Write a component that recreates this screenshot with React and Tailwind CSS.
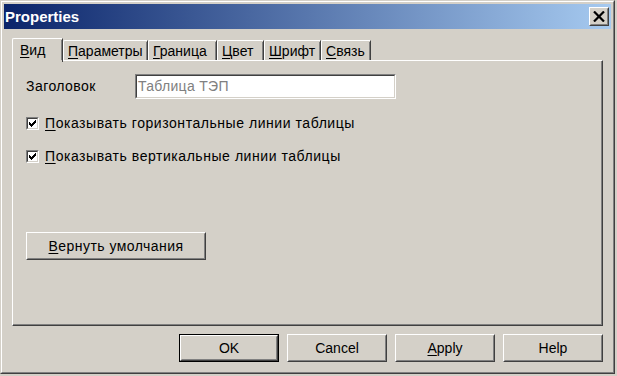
import React from "react";

const font = { fontFamily: '"Liberation Sans", Arial, sans-serif' };

function U({ children }) {
  return <span className="underline underline-offset-2 decoration-1">{children}</span>;
}

function Tab({ first, label }) {
  return (
    <div className="relative z-10 -mb-[2px] h-[24px] w-[51px] border-l border-t border-r border-l-white border-t-white border-r-[#404040] rounded-tl-[2px] bg-[#d4d0c8] flex items-start pt-[2px] pl-[7px]">
      <div className="border-r border-[#808080] absolute right-0 top-[1px] bottom-[2px]" />
      <span className="text-[14px] leading-[18px] text-black"><U>{first}</U>{label}</span>
    </div>
  );
}

function InTab({ first, label, w }) {
  return (
    <div
      className="relative h-[20px] border-l border-t border-r border-l-white border-t-white border-r-[#404040] rounded-tl-[2px] bg-[#d4d0c8] flex items-start pl-[4px] pt-[1px]"
      style={{ width: w }}
    >
      <div className="border-r border-[#808080] absolute right-0 top-[1px] bottom-0" />
      <span className="text-[14px] leading-[18px] text-black whitespace-nowrap"><U>{first}</U>{label}</span>
    </div>
  );
}

function Checkbox({ first, label }) {
  return (
    <div className="flex items-center gap-[6px] h-[14px]">
      <div className="w-[13px] h-[13px] border border-t-[#808080] border-l-[#808080] border-b-white border-r-white">
        <div className="w-full h-full border border-t-[#404040] border-l-[#404040] border-b-[#d4d0c8] border-r-[#d4d0c8] bg-white flex items-center justify-center">
          <svg width="7" height="7" viewBox="0 0 7 7" shapeRendering="crispEdges">
            <path d="M0 2h1v1h1v1h1V3h1V2h1V1h1V0h1v3H6v1H5v1H4v1H3v1H2V6H1V5H0z" fill="#000" />
          </svg>
        </div>
      </div>
      <span className="text-[14px] leading-[18px] tracking-[0.55px] text-black whitespace-nowrap"><U>{first}</U>{label}</span>
    </div>
  );
}

function Btn({ children, def, w = 100 }) {
  return (
    <div className={"h-[28px] " + (def ? "border border-black" : "")} style={{ width: w }}>
      <div className="h-full w-full border border-t-white border-l-white border-b-[#404040] border-r-[#404040]">
        <div className="h-full w-full border border-t-[#d4d0c8] border-l-[#d4d0c8] border-b-[#808080] border-r-[#808080] flex items-center justify-center text-[14px] text-black">
          {children}
        </div>
      </div>
    </div>
  );
}

export default function App() {
  return (
    <div className="w-[617px] h-[376px] bg-[#d4d0c8] overflow-hidden" style={font}>
      <div className="w-[615px] h-[374px] border border-t-[#d4d0c8] border-l-[#d4d0c8] border-b-[#404040] border-r-[#404040]">
        <div className="w-full h-full border border-t-white border-l-white border-b-[#808080] border-r-[#808080] p-[2px] flex flex-col">
          {/* title bar */}
          <div className="h-[25px] flex items-center justify-between pl-[1px] pr-[2px] bg-[linear-gradient(to_right,#0a246a,#a6caf0)]">
            <span className="text-white font-bold text-[15px] leading-none">Properties</span>
            <div className="w-[20px] h-[19px] border border-t-white border-l-white border-b-[#404040] border-r-[#404040] bg-[#d4d0c8]">
              <div className="w-full h-full border border-t-[#d4d0c8] border-l-[#d4d0c8] border-b-[#808080] border-r-[#808080] flex items-center justify-center">
                <svg width="12" height="11" viewBox="0 0 12 11">
                  <path d="M1 0.5L11 10.5M11 0.5L1 10.5" stroke="#000" strokeWidth="2.2" fill="none" />
                </svg>
              </div>
            </div>
          </div>
          {/* body */}
          <div className="flex-1 pl-[8px] pr-[8px] pt-[9px] flex flex-col">
            {/* tabs */}
            <div className="flex items-end h-[22px]">
              <Tab first="В" label="ид" />
              <InTab first="П" label="араметры" w={85} />
              <InTab first="Г" label="раница" w={69} />
              <InTab first="Ц" label="вет" w={47} />
              <InTab first="Ш" label="рифт" w={57} />
              <InTab first="С" label="вязь" w={50} />
            </div>
            {/* panel */}
            <div className="h-[266px] border border-t-white border-l-white border-b-[#404040] border-r-[#404040]">
              <div className="h-full border-r border-b border-[#808080] pl-[13px] pt-[13px] flex flex-col">
                <div className="flex items-center h-[25px]">
                  <span className="w-[109px] text-[14px] tracking-[0.45px] text-black">Заголовок</span>
                  <div className="w-[261px] h-[25px] border border-t-[#808080] border-l-[#808080] border-b-white border-r-white">
                    <div className="w-full h-full border border-t-[#404040] border-l-[#404040] border-b-[#d4d0c8] border-r-[#d4d0c8] bg-white flex items-center pl-[1px]">
                      <span className="text-[14px] tracking-[0.3px] text-[#808080]">Таблица ТЭП</span>
                    </div>
                  </div>
                </div>
                <div className="mt-[17px]">
                  <Checkbox first="П" label="оказывать горизонтальные линии таблицы" />
                </div>
                <div className="mt-[19px]">
                  <Checkbox first="П" label="оказывать вертикальные линии таблицы" />
                </div>
                <div className="mt-[69px]">
                  <Btn w={180}><span className="tracking-[0.45px]"><U>В</U>ернуть умолчания</span></Btn>
                </div>
              </div>
            </div>
            {/* bottom buttons */}
            <div className="flex justify-end gap-[8px] mt-[8px]">
              <Btn def>OK</Btn>
              <Btn>Cancel</Btn>
              <Btn><span><U>A</U>pply</span></Btn>
              <Btn>Help</Btn>
            </div>
          </div>
        </div>
      </div>
    </div>
  );
}
